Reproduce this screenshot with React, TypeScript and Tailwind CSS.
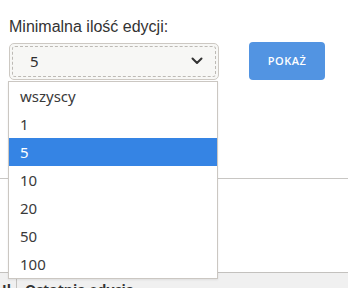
const options = ['wszyscy', '1', '5', '10', '20', '50', '100']

export default function App() {
  const selected = '5'

  return (
    <div className="relative w-[348px] h-[288px] overflow-hidden bg-white">
      <div className="pl-[9px] pt-[17px]">
        <label className="block text-[16px] leading-[20px] text-[#333] font-['Liberation_Sans',Arial,sans-serif]">
          Minimalna ilość edycji:
        </label>
        <div className="mt-[5px] flex items-center gap-[30px]">
          <div className="w-[210px] h-[37px] rounded-[5px] border border-[#cdc9c3] bg-[#f7f7f5] p-[2px]">
            <div className="h-full flex items-center justify-between rounded-[3px] border border-dashed border-[#bdbab5] pl-[17px] pr-[12px]">
              <span className="text-[15px] text-[#2e2e2e] font-['Noto_Sans','Open_Sans',sans-serif]">{selected}</span>
              <svg width="12" height="8" viewBox="0 0 12 8" fill="none">
                <path d="M1.5 1.5 L6 6 L10.5 1.5" stroke="#333" strokeWidth="2" strokeLinecap="round" strokeLinejoin="round" />
              </svg>
            </div>
          </div>
          <button className="w-[76px] h-[38px] rounded-[4px] bg-[#5294e2] text-white text-[11px] font-semibold tracking-[0.5px] font-['Open_Sans','Noto_Sans',sans-serif]">
            POKAŻ
          </button>
        </div>
      </div>

      <div className="mt-[98px] border-t border-[#c8c6c3]" />

      <div className="mt-[93px] h-[20px] border-t border-[#c3c1be] bg-[#f0f0f0] flex text-[14px] leading-[20px] font-bold text-[#333] font-['Open_Sans',sans-serif]">
        <div className="w-[17px] border-r border-[#c3c1be] pl-[2px] pt-[7px] overflow-hidden whitespace-nowrap">Ił</div>
        <div className="pl-[8px] pt-[7px] whitespace-nowrap">Ostatnia edycja</div>
      </div>

      <ul className="absolute left-[8px] top-[81px] w-[210px] border border-[#cbc7c2] bg-white shadow-[0_1px_2px_rgba(0,0,0,0.08)] font-['Noto_Sans','Open_Sans',sans-serif]">
        {options.map(o => (
          <li
            key={o}
            className={
              o === selected
                ? 'h-[28px] flex items-center pl-[11px] text-[15px] bg-[#3584e4] text-white'
                : 'h-[28px] flex items-center pl-[11px] text-[15px] text-[#3a3a3a]'
            }
          >
            {o}
          </li>
        ))}
      </ul>
    </div>
  )
}
